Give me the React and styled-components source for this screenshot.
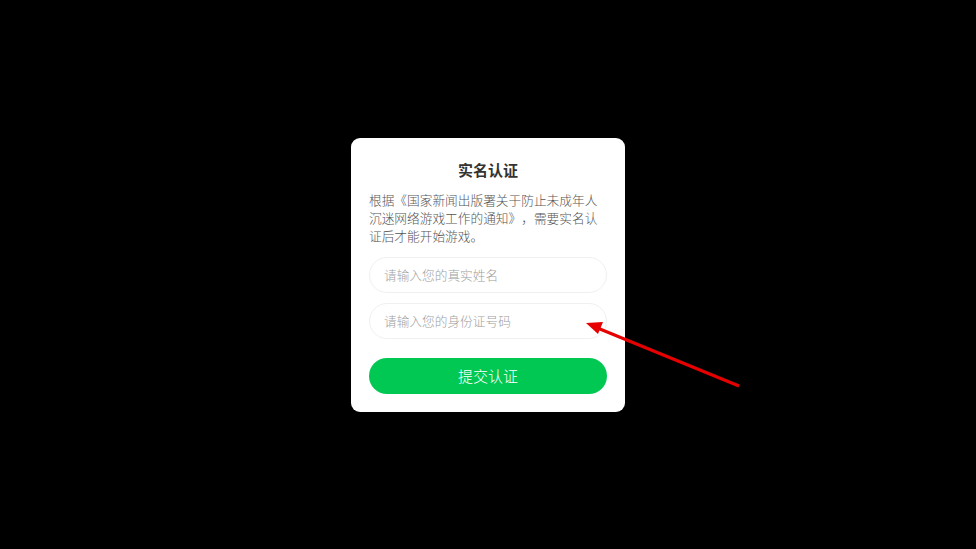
import styled, { createGlobalStyle } from 'styled-components';

const GlobalStyle = createGlobalStyle`
  html, body {
    margin: 0;
    padding: 0;
    background: #000;
  }
  body {
    font-family: "Noto Sans CJK SC", "Noto Sans", sans-serif;
    text-spacing-trim: space-all;
  }
`;

const Screen = styled.div`
  position: relative;
  width: 976px;
  height: 549px;
  background: #000;
  display: flex;
  align-items: center;
  justify-content: center;
  overflow: hidden;
`;

const Card = styled.div`
  width: 274px;
  box-sizing: border-box;
  padding: 19px 18px 18px;
  background: #fff;
  border-radius: 9px;
  display: flex;
  flex-direction: column;
`;

const Title = styled.h2`
  margin: 0;
  font-size: 15px;
  line-height: 26px;
  font-weight: 700;
  color: #333;
  text-align: center;
`;

const Notice = styled.p`
  margin: 8px 0 0;
  font-size: 12.7px;
  line-height: 18px;
  font-weight: 300;
  color: #555;
`;

const Field = styled.input`
  display: block;
  width: 100%;
  height: 36px;
  box-sizing: border-box;
  margin-top: ${(p) => p.$gap}px;
  padding: 0 14px;
  border: 1px solid #f0f0f0;
  border-radius: 18px;
  outline: none;
  font-family: inherit;
  font-size: 12.7px;
  font-weight: 300;
  color: #333;
  background: #fff;

  &::placeholder {
    color: #a0a0a0;
  }
`;

const Submit = styled.button`
  margin-top: 19px;
  height: 36px;
  border: none;
  border-radius: 18px;
  background: #00c853;
  color: #fff;
  font-family: inherit;
  font-size: 15px;
  font-weight: 300;
  cursor: pointer;
`;

const Pointer = styled.svg`
  position: absolute;
  left: 0;
  top: 0;
  pointer-events: none;
`;

export default function App() {
  return (
    <Screen>
      <GlobalStyle />
      <Card>
        <Title>实名认证</Title>
        <Notice>
          根据《国家新闻出版署关于防止未成年人沉迷网络游戏工作的通知》，需要实名认证后才能开始游戏。
        </Notice>
        <Field $gap={12} placeholder="请输入您的真实姓名" />
        <Field $gap={10} placeholder="请输入您的身份证号码" />
        <Submit type="button">提交认证</Submit>
      </Card>
      <Pointer width="976" height="549" viewBox="0 0 976 549">
        <line x1="739" y1="386" x2="595" y2="327" stroke="#e60000" strokeWidth="3" />
        <polygon points="586,323 603,322 598,334" fill="#e60000" />
      </Pointer>
    </Screen>
  );
}
